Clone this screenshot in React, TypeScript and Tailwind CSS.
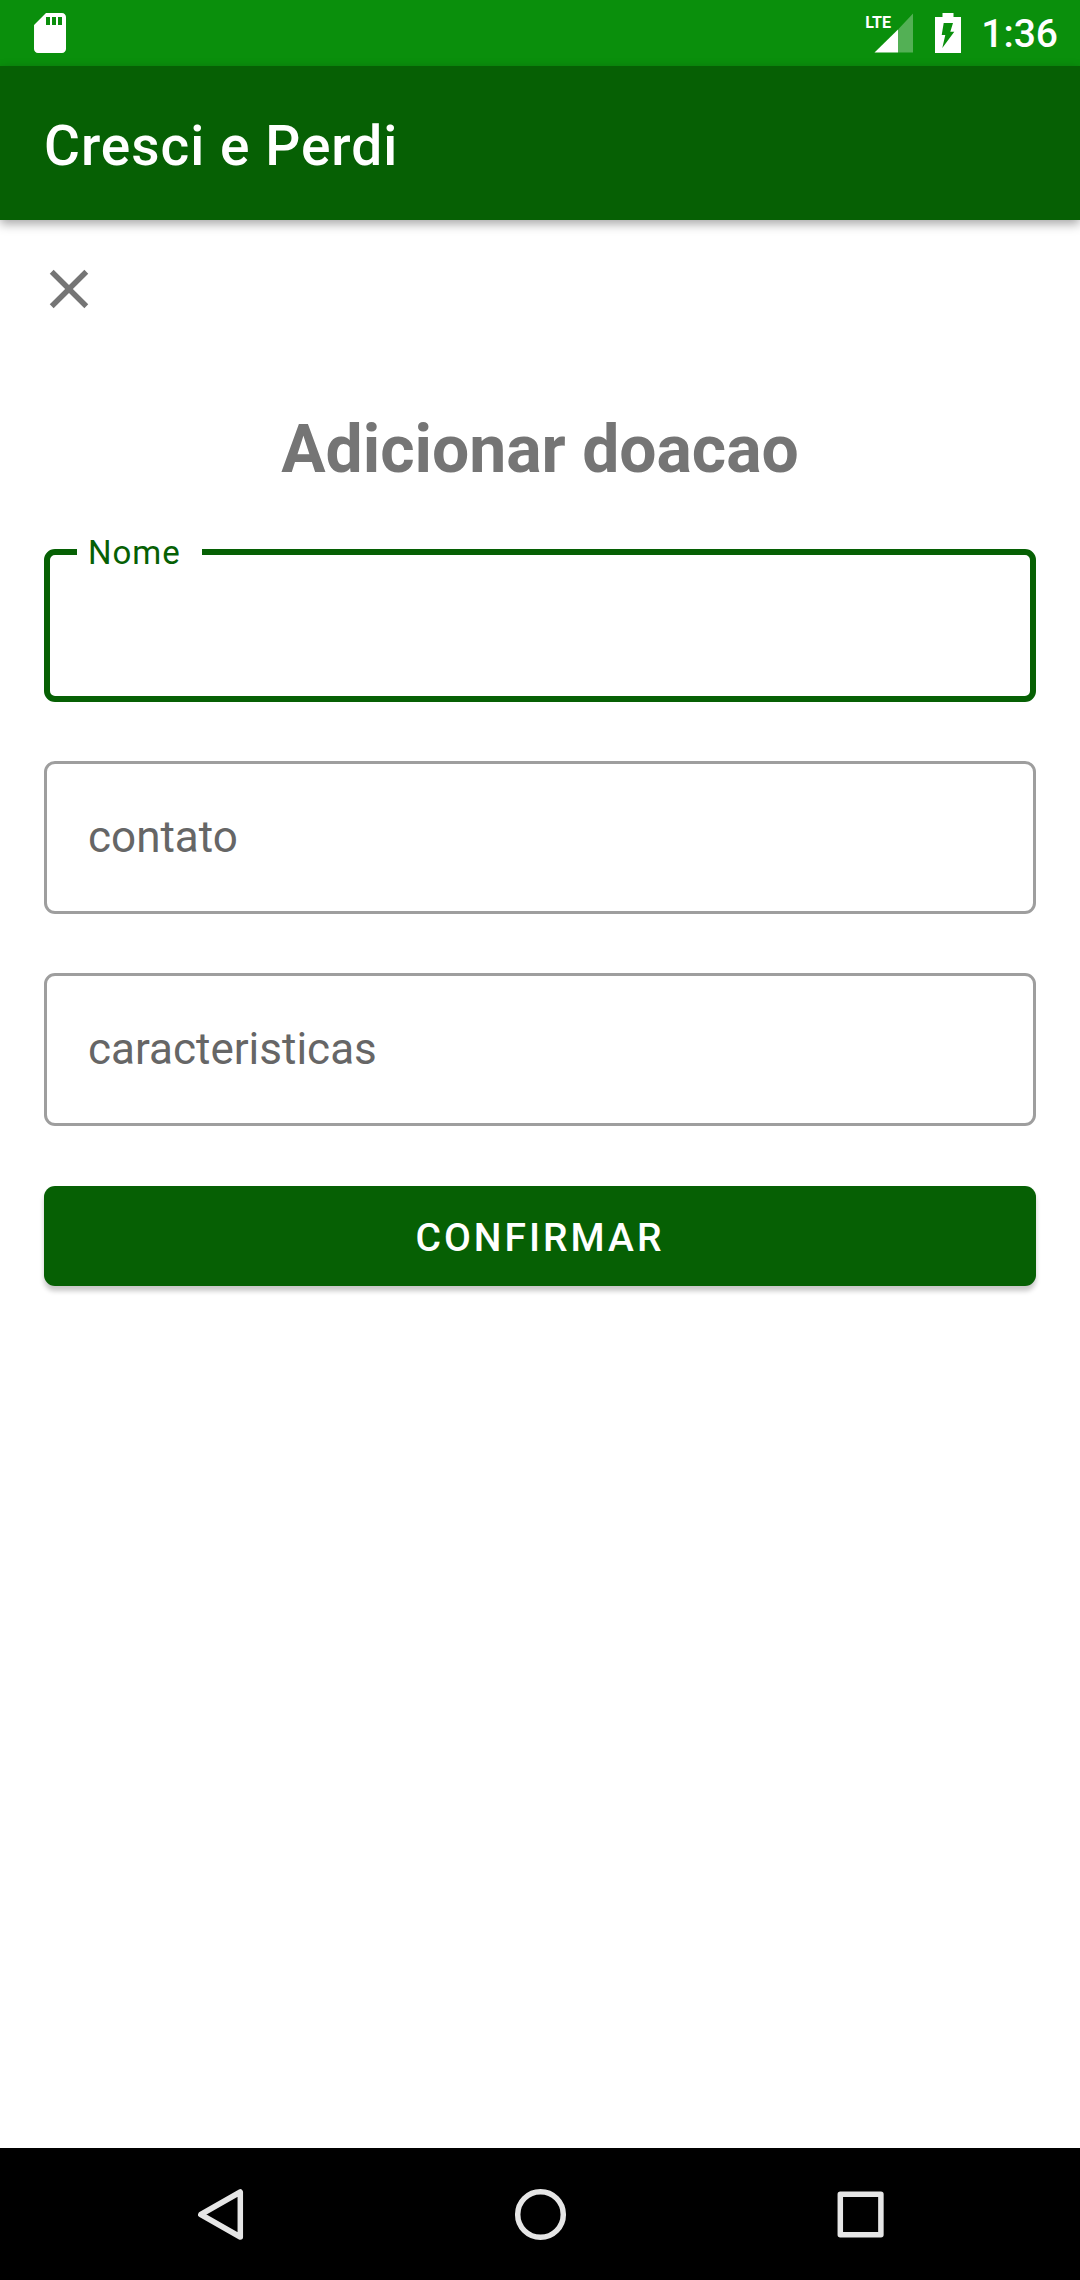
import { useState } from "react";

type FieldProps = {
  id: string;
  label: string;
  active: boolean;
  onActivate: () => void;
};

function Field({ id, label, active, onActivate }: FieldProps) {
  const [value, setValue] = useState("");
  const floating = active || value !== "";
  return (
    <div className="relative">
      <input
        id={id}
        type="text"
        value={value}
        onChange={(e) => setValue(e.target.value)}
        onFocus={onActivate}
        className={
          active
            ? "block h-[153px] w-full rounded-[11px] border-6 border-[#066004] bg-white px-[38px] text-[44px] text-[#212121] outline-none"
            : "block h-[153px] w-full rounded-[11px] border-3 border-[#9e9e9e] bg-white px-[41px] text-[44px] text-[#212121] outline-none"
        }
      />
      <label
        htmlFor={id}
        className={
          floating
            ? "absolute -top-4 left-[33px] bg-white pr-[21px] pl-[11px] text-[33px] leading-10 tracking-[1px] text-[#066004]"
            : "pointer-events-none absolute inset-y-0 left-11 flex items-center pb-[2px] text-[44px] leading-none text-[#666666]"
        }
      >
        {label}
      </label>
    </div>
  );
}

function SdCardIcon() {
  return (
    <svg viewBox="0 0 24 24" className="size-12" fill="#fff" aria-hidden="true">
      <path d="M18 2h-8L4.02 8 4 20c0 1.1.9 2 2 2h12c1.1 0 2-.9 2-2V4c0-1.1-.9-2-2-2zm-6 6h-2V4h2v4zm3 0h-2V4h2v4zm3 0h-2V4h2v4z" />
    </svg>
  );
}

function SignalIcon() {
  return (
    <div className="relative h-10 w-12">
      <svg viewBox="0 0 48 40" className="size-full" fill="#fff" aria-hidden="true">
        <path d="M33 16.500 48 .5V39.500H33z" fillOpacity=".3" />
        <path d="M9.500 39.500 33 16.500v23z" />
      </svg>
      <span className="absolute top-0 left-0 text-base leading-5 font-bold">LTE</span>
    </div>
  );
}

function BatteryIcon() {
  return (
    <svg viewBox="0 0 26 40" className="h-10 w-[26px]" aria-hidden="true">
      <path d="M7.500 0h11v4H26v36H0V4h7.500z" fill="#fff" />
      <path d="M8.700 10H18l-2.700 8.700h4L7.300 35l3-13H6.700z" fill="#0a8f0c" />
    </svg>
  );
}

export default function App() {
  const [active, setActive] = useState("nome");
  return (
    <div className="flex min-h-screen flex-col bg-white font-['Roboto',sans-serif]">
      <div className="flex h-[66px] items-center justify-between bg-[#0a8f0c] pr-[22px] pl-[26px] text-white">
        <SdCardIcon />
        <div className="flex items-center gap-5">
          <div className="flex items-center gap-[22px]">
            <SignalIcon />
            <BatteryIcon />
          </div>
          <span className="pt-[3px] text-[39px] leading-none font-medium">1:36</span>
        </div>
      </div>

      <header className="flex h-[154px] items-center bg-[#066004] px-11 pt-[6px] shadow-[0_4px_10px_rgba(0,0,0,0.35)]">
        <h1 className="text-[55px] leading-none font-medium tracking-[1px] text-white">Cresci e Perdi</h1>
      </header>

      <main className="flex grow flex-col px-11 pt-9">
        <button type="button" aria-label="Fechar" className="-ml-2 size-[66px]">
          <svg viewBox="0 0 24 24" className="size-full" fill="#757575" aria-hidden="true">
            <path d="M19 6.410 17.590 5 12 10.590 6.410 5 5 6.410 10.590 12 5 17.590 6.410 19 12 13.410 17.590 19 19 17.590 13.410 12z" />
          </svg>
        </button>
        <h2 className="mt-[89px] text-center text-[66px] leading-[78px] font-bold text-[#757575]">Adicionar doacao</h2>
        <form className="mt-[60px] flex flex-col gap-[59px]" onSubmit={(e) => e.preventDefault()}>
          <Field id="nome" label="Nome" active={active === "nome"} onActivate={() => setActive("nome")} />
          <Field id="contato" label="contato" active={active === "contato"} onActivate={() => setActive("contato")} />
          <Field
            id="caracteristicas"
            label="caracteristicas"
            active={active === "caracteristicas"}
            onActivate={() => setActive("caracteristicas")}
          />
          <button
            type="submit"
            className="mt-px h-[100px] rounded-[11px] bg-[#066004] pt-1 text-[39px] font-medium tracking-[3px] text-white uppercase shadow-[0_5px_5px_rgba(0,0,0,0.22)]"
          >
            Confirmar
          </button>
        </form>
      </main>

      <nav className="grid h-[132px] grid-cols-3 items-center bg-black px-[60px]">
        <button type="button" aria-label="Voltar" className="flex justify-center">
          <svg viewBox="0 0 56 56" className="size-14" fill="none" stroke="#e6e6e6" strokeWidth="5.500" strokeLinejoin="round" aria-hidden="true">
            <path d="M48.300 6v45L8.800 28.500z" />
          </svg>
        </button>
        <button type="button" aria-label="Início" className="flex justify-center">
          <svg viewBox="0 0 56 56" className="size-14" fill="none" stroke="#e6e6e6" strokeWidth="5.500" aria-hidden="true">
            <circle cx="28.500" cy="28.500" r="22.800" />
          </svg>
        </button>
        <button type="button" aria-label="Recentes" className="flex justify-center">
          <svg viewBox="0 0 56 56" className="size-14" fill="none" stroke="#e6e6e6" strokeWidth="5.500" strokeLinejoin="round" aria-hidden="true">
            <path d="M8.300 8.200h40.600v40.600H8.300z" />
          </svg>
        </button>
      </nav>
    </div>
  );
}
